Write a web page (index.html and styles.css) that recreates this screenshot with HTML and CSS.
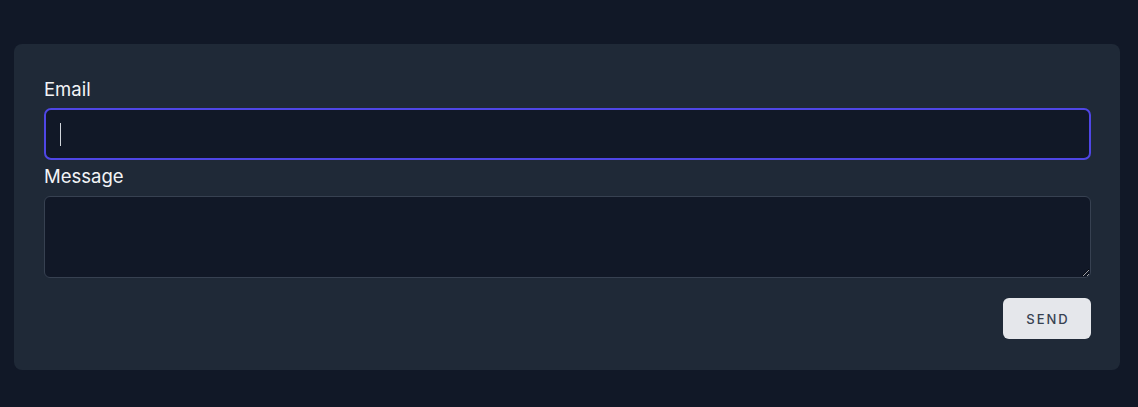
FILE: index.html
```html
<!DOCTYPE html>
<html lang="en">
<head>
<meta charset="utf-8">
<title>Contact</title>
<link rel="stylesheet" href="styles.css">
</head>
<body>
<form class="card">
  <label class="label label-first" for="email">Email</label>
  <div class="field-wrap">
    <input class="input input-focus" id="email" type="email">
    <span class="caret"></span>
  </div>
  <label class="label label-second" for="msg">Message</label>
  <textarea class="textarea" id="msg"></textarea>
  <div class="actions">
    <button class="btn" type="button">SEND</button>
  </div>
</form>
</body>
</html>
```
FILE: styles.css
```css
html, body {
  margin: 0;
  background: #111827;
}
body {
  padding: 44px 18px 37px 14px;
  font-family: Inter, "Open Sans", "Liberation Sans", sans-serif;
}
.card {
  background: #1f2937;
  border-radius: 8px;
  padding: 30px 29px 31px 30px;
  display: flex;
  flex-direction: column;
}
.label {
  color: #f3f4f6;
  font-size: 18.5px;
  line-height: 28px;
}
.label-first {
  padding-top: 1px;
  margin-bottom: 5px;
}
.label-second {
  padding-top: 2px;
  margin-bottom: 6px;
}
.field-wrap {
  position: relative;
}
.input {
  box-sizing: border-box;
  width: 100%;
  height: 52px;
  background: #111827;
  border: 1px solid #374151;
  border-radius: 7px;
  outline: none;
  color: #f3f4f6;
  font-size: 16px;
  padding: 0 15px;
  display: block;
}
.input-focus {
  border: 2px solid #4f46e5;
}
.caret {
  position: absolute;
  left: 16px;
  top: 15px;
  width: 1px;
  height: 23px;
  background: #d1d5db;
}
.textarea {
  box-sizing: border-box;
  width: 100%;
  height: 82px;
  background: #111827;
  border: 1px solid #374151;
  border-radius: 6px;
  outline: none;
  color: #f3f4f6;
  font-size: 16px;
  padding: 8px 12px;
  font-family: inherit;
  display: block;
}
.actions {
  display: flex;
  justify-content: flex-end;
  margin-top: 20px;
}
.btn {
  width: 88px;
  height: 41px;
  background: #e5e7eb;
  color: #374151;
  border: none;
  border-radius: 6px;
  font-family: inherit;
  font-size: 13px;
  font-weight: 500;
  letter-spacing: 2px;
  padding: 0 0 0 2px;
}
```
